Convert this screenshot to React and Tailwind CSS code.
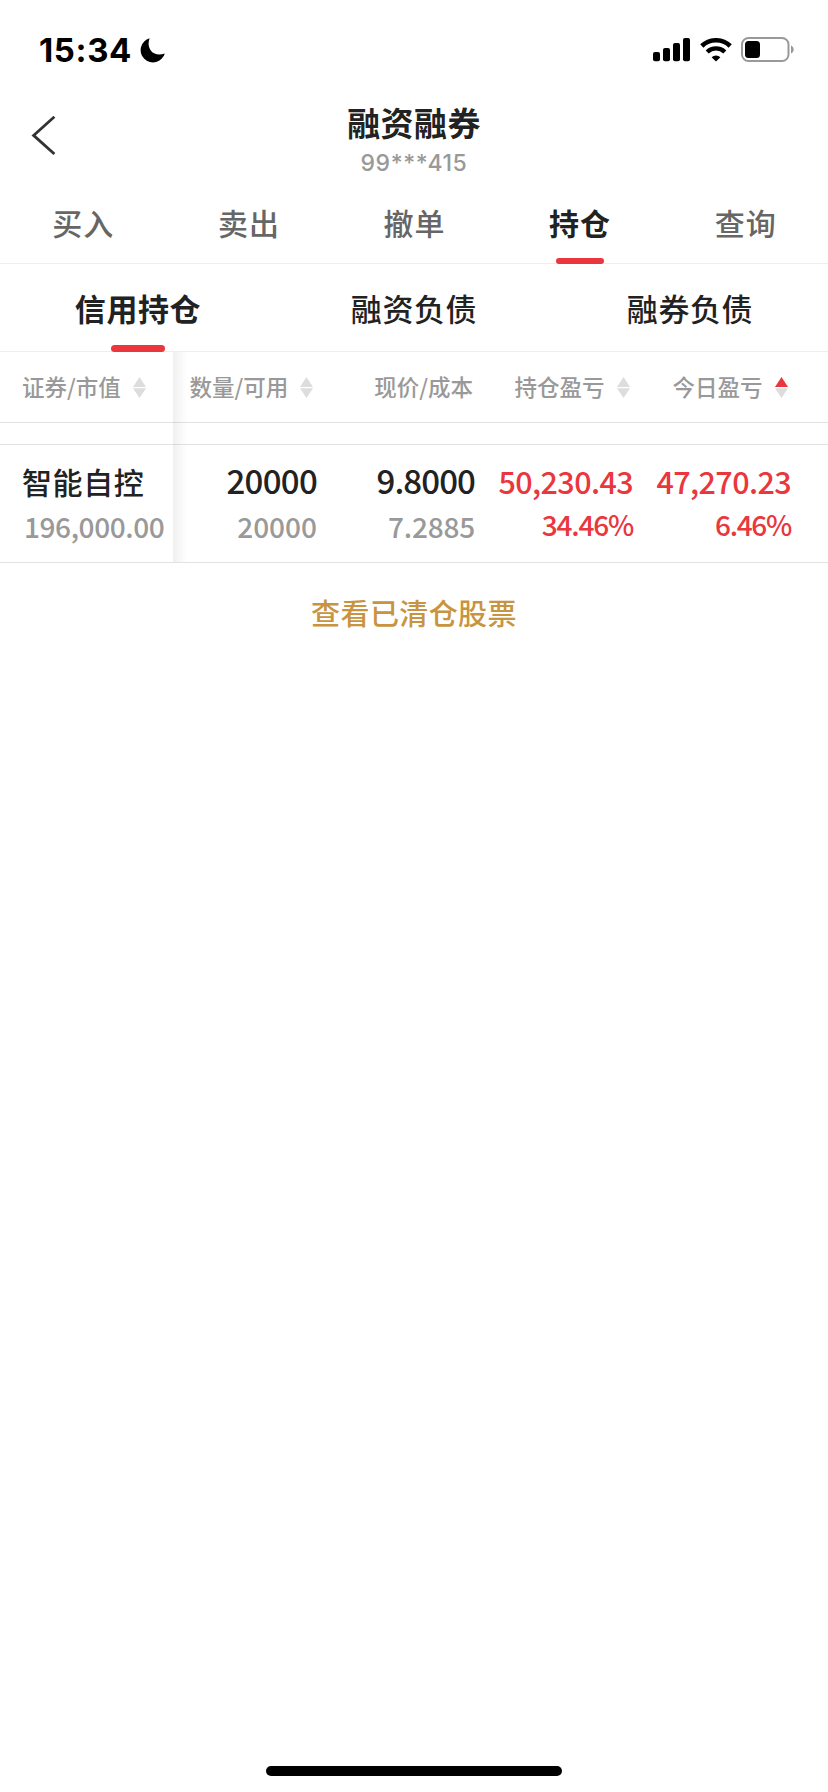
import React, { useState } from "react";

const mainTabs = ["买入", "卖出", "撤单", "持仓", "查询"];
const subTabs = ["信用持仓", "融资负债", "融券负债"];

function StatusBar() {
  return (
    <div className="h-[98px] flex items-center justify-between pl-[39px] pr-[34px] text-black">
      <div className="flex items-center gap-[8px] pt-[2px]">
        <span className="font-[Inter] font-bold text-[33px] leading-[40px] tracking-[0.6px]">15:34</span>
        <svg width="25" height="25" viewBox="0 0 25 25">
          <path
            d="M9.6 0.3 A12.3 12.3 0 1 0 24.8 15.4 C19.5 17.6 14 16.6 11 12.8 C8.2 9.2 8 4.6 9.6 0.3 Z"
            fill="currentColor"
          />
        </svg>
      </div>
      <div className="flex items-center pt-px">
        <svg width="37" height="24" viewBox="0 0 37 24" fill="currentColor">
          <rect x="0" y="14" width="7" height="9.3" rx="2" />
          <rect x="10" y="10" width="7" height="13.3" rx="2" />
          <rect x="20" y="5" width="7" height="18.3" rx="2" />
          <rect x="30" y="0" width="7" height="23.3" rx="2" />
        </svg>
        <svg className="ml-[9.5px]" width="32" height="24" viewBox="0 0 32 24" fill="none" stroke="currentColor">
          <path d="M1.8 8 A20.5 20.5 0 0 1 30.2 8" strokeWidth="4.6" />
          <path d="M7.2 14 A12.6 12.6 0 0 1 24.8 14" strokeWidth="4.4" />
          <path d="M16 23.6 L11.6 19.3 A6.3 6.3 0 0 1 20.4 19.3 Z" fill="currentColor" stroke="none" />
        </svg>
        <svg className="ml-[9.5px]" width="53" height="25" viewBox="0 0 53 25">
          <rect x="1" y="1" width="46.5" height="23" rx="6.5" fill="none" stroke="#999" strokeWidth="2" />
          <rect x="4" y="4" width="15" height="17" rx="3.5" fill="currentColor" />
          <path d="M50 8.5 C53.6 10 53.6 15 50 16.5 Z" fill="#999" />
        </svg>
      </div>
    </div>
  );
}

function SortIcon({ up }) {
  return (
    <svg width="13" height="21" viewBox="0 0 13 21">
      <path d="M6.5 0 L13 10 H0 Z" fill={up ? "#e9373d" : "#ddd"} />
      <path d="M0 11.2 H13 L6.5 21 Z" fill="#ddd" />
    </svg>
  );
}

function HeadCell({ label, sort, up, className }) {
  return (
    <div className={`flex items-center ${className}`}>
      <span className="-mt-px">{label}</span>
      {sort && (
        <span className="ml-[12px]">
          <SortIcon up={up} />
        </span>
      )}
    </div>
  );
}

function App() {
  const [tab, setTab] = useState("持仓");
  const [subTab, setSubTab] = useState("信用持仓");

  return (
    <div className="h-[1792px] w-[828px] overflow-hidden flex flex-col bg-white text-[#222] font-['Noto_Sans_CJK_SC',sans-serif]">
      <StatusBar />

      <header className="h-[82px] flex">
        <button className="w-[100px] pl-[31px] pt-[18px] flex items-start">
          <svg width="25" height="40" viewBox="0 0 25 40" fill="none" stroke="#333" strokeWidth="2.8">
            <path d="M23.4 0.8 L2.6 19.4 L23.4 38" />
          </svg>
        </button>
        <div className="flex-1 flex flex-col items-center">
          <h1 className="mt-[2px] text-[33px] leading-[44px] font-bold tracking-[0.4px]">融资融券</h1>
          <p className="-mt-px font-[Inter] font-medium text-[23px] leading-[40px] tracking-[0.6px] text-[#999]">99***415</p>
        </div>
        <div className="w-[100px]" />
      </header>

      <nav className="h-[84px] grid grid-cols-5 border-b border-[#eee]">
        {mainTabs.map((t) => (
          <button key={t} onClick={() => setTab(t)} className="relative flex justify-center">
            <span
              className={`mt-[20px] pl-px text-[30px] leading-[44px] tracking-[1px] ${
                t === tab ? "font-bold text-[#222]" : "font-medium text-[#666]"
              }`}
            >
              {t}
            </span>
            {t === tab && <i className="absolute -bottom-px w-[48px] h-[6px] rounded-full bg-[#e9373d]" />}
          </button>
        ))}
      </nav>

      <nav className="h-[88px] grid grid-cols-3 border-b border-[#eee]">
        {subTabs.map((t) => (
          <button key={t} onClick={() => setSubTab(t)} className="relative flex justify-center">
            <span
              className={`mt-[22px] text-[31px] leading-[44px] tracking-[0.6px] ${
                t === subTab ? "font-bold" : "font-medium"
              }`}
            >
              {t}
            </span>
            {t === subTab && <i className="absolute -bottom-px w-[54px] h-[7px] rounded-full bg-[#e9373d]" />}
          </button>
        ))}
      </nav>

      <section className="relative">
        <div className="h-[71px] flex text-[22.5px] font-medium text-[#999] border-b border-[#e2e2e2]">
          <HeadCell label="证券/市值" sort className="w-[173px] pl-[22px]" />
          <HeadCell label="数量/可用" sort className="w-[143px] pl-[16.5px]" />
          <HeadCell label="现价/成本" className="w-[158px] justify-end pr-px" />
          <HeadCell label="持仓盈亏" sort className="w-[158px] justify-end pr-[2.5px]" />
          <HeadCell label="今日盈亏" sort up className="w-[158px] justify-end pr-[2.5px]" />
        </div>
        <div className="h-[22px] border-b border-[#e2e2e2]" />
        <div className="h-[118px] flex border-b border-[#e2e2e2] text-right font-medium">
          <div className="w-[173px] pl-[22px] pt-[13px] text-left">
            <p className="text-[30px] leading-[46px] tracking-[0.6px]">智能自控</p>
            <p className="pl-[2px] text-[28px] leading-[44px] tracking-[-0.4px] text-[#999]">196,000.00</p>
          </div>
          <div className="w-[144px] pt-[12px]">
            <p className="text-[33px] leading-[46px] tracking-[-0.7px]">20000</p>
            <p className="mt-px text-[28px] leading-[44px] text-[#999]">20000</p>
          </div>
          <div className="w-[158px] pt-[12px]">
            <p className="text-[33px] leading-[46px] tracking-[-0.9px]">9.8000</p>
            <p className="mt-px text-[28px] leading-[44px] tracking-[-0.2px] text-[#999]">7.2885</p>
          </div>
          <div className="w-[158px] pt-[13px] text-[#e9373d]">
            <p className="text-[30.5px] leading-[46px] tracking-[-0.6px]">50,230.43</p>
            <p className="text-[28px] leading-[40px] tracking-[-1.2px]">34.46%</p>
          </div>
          <div className="w-[158px] pt-[13px] text-[#e9373d]">
            <p className="text-[30.5px] leading-[46px] tracking-[-0.6px]">47,270.23</p>
            <p className="text-[28px] leading-[40px] tracking-[-1.3px]">6.46%</p>
          </div>
        </div>
        {/* 固定列右侧阴影 */}
        <div className="absolute left-[173px] top-0 bottom-px w-[14px] bg-linear-to-r from-black/6 to-transparent" />
      </section>

      <button className="mt-[27px] text-center text-[29px] leading-[44px] font-medium tracking-[0.4px] text-[#c89440]">
        查看已清仓股票
      </button>

      <div className="mt-auto mb-[16px] mx-auto w-[296px] h-[10px] rounded-full bg-black" />
    </div>
  );
}

export default App;
